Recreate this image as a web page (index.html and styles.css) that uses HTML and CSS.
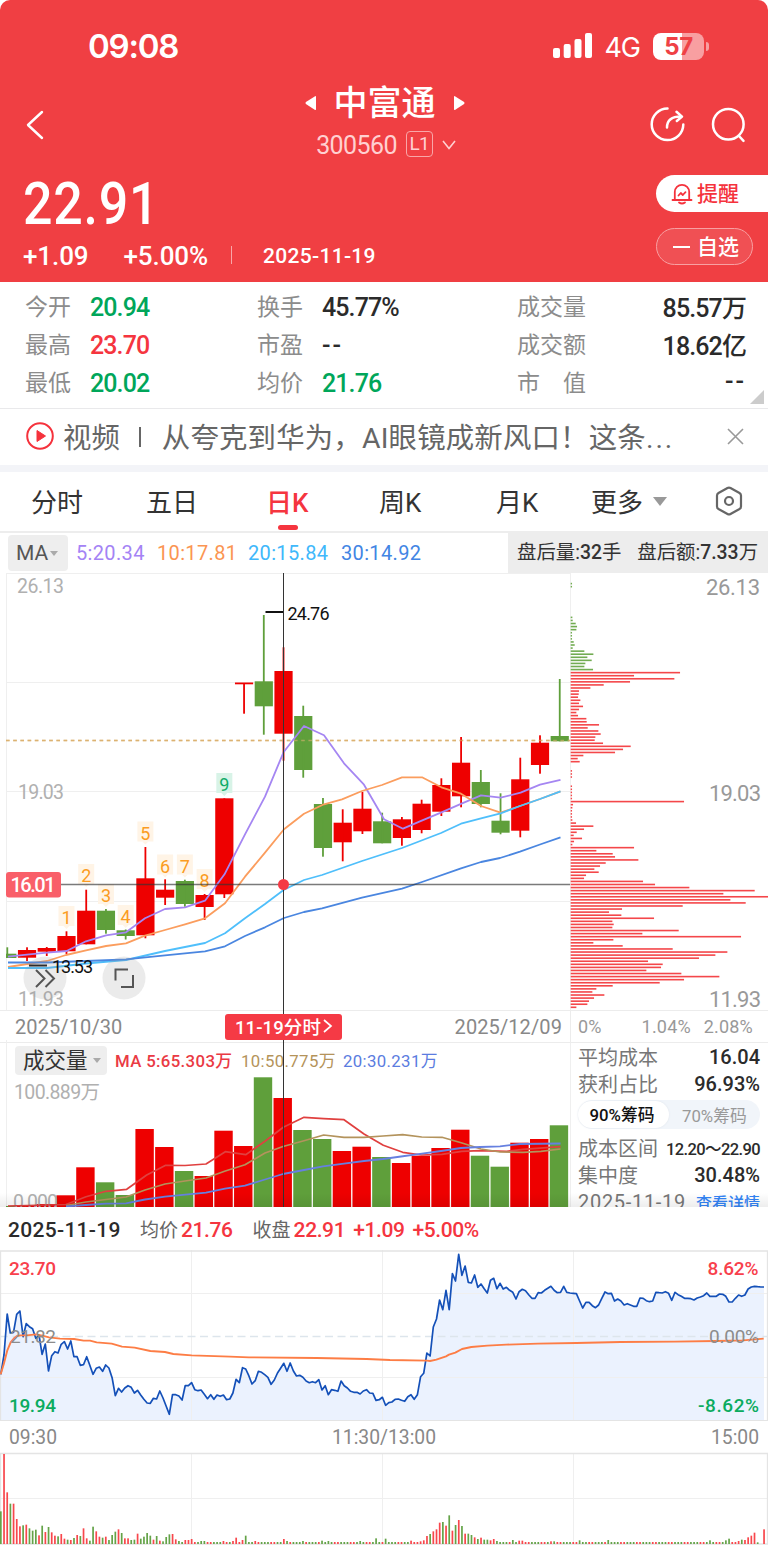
FILE: index.html
```html
<!DOCTYPE html>
<html lang="zh-CN">
<head>
    <meta charset="UTF-8">
    <meta name="viewport" content="width=device-width, initial-scale=1.0">
    <title>中富通 300560</title>
    <link rel="stylesheet" href="styles.css">
</head>
<body>
    <header class="header">
        <div class="status-bar">
            <span class="clock">09:08</span>
            <div class="status-right">
                <svg width="40" height="26" viewBox="0 0 40 26" fill="#fff">
                    <rect x="0" y="15" width="7" height="10" rx="2"/>
                    <rect x="10.7" y="11" width="7" height="14" rx="2"/>
                    <rect x="21.5" y="6" width="7" height="19" rx="2"/>
                    <rect x="32" y="0" width="7" height="25" rx="2"/>
                </svg>
                <span class="network">4G</span>
                <div class="battery"><span>57</span></div>
                <i class="battery-tip"></i>
            </div>
        </div>

        <nav class="nav">
            <svg class="back" width="20" height="30" viewBox="0 0 20 30" fill="none" stroke="#fff" stroke-width="2.4" stroke-linecap="round" stroke-linejoin="round"><path d="M17 2 3 15 17 28"/></svg>
            <div class="stock">
                <div class="stock-name">
                    <svg width="11" height="16" viewBox="0 0 12 16" fill="#fff"><path d="M11 0.5Q12 0 12 1.500V14.500Q12 16 11 15.500L1 9Q0 8 1 7z"/></svg>
                    <h1>中富通</h1>
                    <svg width="11" height="16" viewBox="0 0 12 16" fill="#fff"><path d="M1 0.5Q0 0 0 1.500V14.500Q0 16 1 15.500L11 9Q12 8 11 7z"/></svg>
                </div>
                <div class="stock-code">
                    <span>300560</span>
                    <span class="level">L1</span>
                    <svg width="14" height="10" viewBox="0 0 14 10" fill="none" stroke="#ffd0d1" stroke-width="1.6"><path d="M1 0 7 7.500 13 0"/></svg>
                </div>
            </div>
            <div class="nav-icons">
                <svg width="36" height="36" viewBox="0 0 36 36" fill="none" stroke="#fff" stroke-width="2.5" stroke-linecap="round" stroke-linejoin="round">
                    <path d="M17.500 1.500A15.800 15.800 0 1 0 33.300 17.500"/>
                    <path d="M17 20.500C17 13 21.500 9.600 31 9.600"/>
                    <path d="M26.500 4.800 32 9.600 26.800 14"/>
                </svg>
                <svg width="36" height="36" viewBox="0 0 36 36" fill="none" stroke="#fff" stroke-width="2.500" stroke-linecap="round">
                    <circle cx="17.300" cy="17.300" r="15.300"/>
                    <path d="m28 29 4.500 4.800"/>
                </svg>
            </div>
        </nav>

        <div class="quote">
            <div class="quote-left">
                <div class="price">22.91</div>
                <div class="change">
                    <span>+1.09</span>
                    <span class="pct">+5.00%</span>
                    <i class="bar"></i>
                    <span class="date">2025-11-19</span>
                </div>
            </div>
            <div class="quote-right">
                <div class="remind">
                    <svg width="22" height="22" viewBox="0 0 22 22" fill="none" stroke="#f5323c" stroke-width="1.800" stroke-linecap="round" stroke-linejoin="round">
                        <path d="M3.800 17V9a7.200 7.200 0 0 1 14.400 0V17M1.500 17h19M8 19.500q3 2 6 0M7.500 12.500l2.300-2.500 2 2 2.700-2.800"/>
                    </svg>
                    <span>提醒</span>
                </div>
                <div class="watch"><i></i><span>自选</span></div>
            </div>
        </div>
    </header>

    <section class="stats">
        <dl>
            <div><dt>今开</dt><dd class="down">20.94</dd></div>
            <div><dt>最高</dt><dd class="up">23.70</dd></div>
            <div><dt>最低</dt><dd class="down">20.02</dd></div>
        </dl>
        <dl>
            <div><dt>换手</dt><dd>45.77%</dd></div>
            <div><dt>市盈</dt><dd class="none">--</dd></div>
            <div><dt>均价</dt><dd class="down">21.76</dd></div>
        </dl>
        <dl class="spread">
            <div><dt>成交量</dt><dd>85.57万</dd></div>
            <div><dt>成交额</dt><dd>18.62亿</dd></div>
            <div><dt>市　值</dt><dd class="none">--</dd></div>
        </dl>
        <i class="corner"></i>
    </section>

    <section class="news">
        <svg width="28" height="28" viewBox="0 0 28 28"><circle cx="14" cy="14" r="12.800" fill="none" stroke="#f5323c" stroke-width="2"/><path d="M11 8.500 19.500 14 11 19.500z" fill="#f5323c" stroke="#f5323c" stroke-linejoin="round"/></svg>
        <span class="tag">视频</span>
        <i></i>
        <p>从夸克到华为，AI眼镜成新风口！这条<span class="dots">...</span></p>
        <svg class="close" width="17" height="17" viewBox="0 0 17 17" stroke="#999" stroke-width="1.600"><path d="m1 1 15 15M16 1 1 16"/></svg>
    </section>

    <nav class="tabs">
        <a>分时</a>
        <a>五日</a>
        <a class="active">日K</a>
        <a>周K</a>
        <a>月K</a>
        <a class="more">更多<i></i></a>
        <svg width="28" height="30" viewBox="0 0 28 30" fill="none" stroke="#666" stroke-width="2.200" stroke-linejoin="round"><path d="M12.500 2q1.500-.8 3 0l9 5q1.500.9 1.500 2.600v10.800q0 1.700-1.500 2.600l-9 5q-1.500.8-3 0l-9-5Q2 22.100 2 20.400V9.600Q2 7.900 3.500 7z"/><circle cx="14" cy="15" r="4"/></svg>
    </nav>

    <section class="ma-bar">
        <button class="picker">MA<i></i></button>
        <span class="ma5">5:20.34</span>
        <span class="ma10">10:17.81</span>
        <span class="ma20">20:15.84</span>
        <span class="ma30">30:14.92</span>
        <div class="after-hours"><span>盘后量:<b>32</b>手</span><span>盘后额:<b>7.33</b>万</span></div>
    </section>

    <main class="charts">
        <div class="left">
            <svg class="kline" width="570" height="437" viewBox="0 573 570 437">
                <path class="grid" d="M6 573.500H570M6 682.500H570M6 791.500H570M6 901.500H570M6.500 573V1010"/>
                <g class="axis-text">
                    <text x="17" y="593" textLength="47">26.13</text>
                    <text x="18" y="799" textLength="46">19.03</text>
                    <text x="18" y="1005.500" textLength="46">11.93</text>
                </g>
                <path d="M6 740.500H570" stroke="#dcb272" stroke-width="1.600" stroke-dasharray="3.600 3.600"/>
                <g id="candles"></g>
                <path d="M6 740.500H570" stroke="#dcb272" stroke-opacity=".6" stroke-width="1.400" stroke-dasharray="3.600 3.600"/>
                <g id="signals"></g>
                <g id="ma-lines"></g>
                <path d="M265.500 612H283M29 965.500H47" stroke="#111" stroke-width="1.800"/>
                <text class="mark" x="287.500" y="619.500" textLength="42">24.76</text>
                <g fill="#999" fill-opacity=".2"><circle cx="45" cy="978" r="21.500"/><circle cx="124" cy="978" r="21.500"/></g>
                <text class="mark" x="52" y="973" textLength="41">13.53</text>
                <path d="m36 970 8.500 8.500-8.500 8.500M45.500 970l8.500 8.500-8.500 8.500M115.500 980.500V969.500H128M121 987H133V975" fill="none" stroke="#555" stroke-width="2"/>
                <path d="M61 884.500H570" stroke="#333" stroke-opacity=".65" stroke-width="1.600"/>
                <rect x="6" y="872" width="55" height="25.500" rx="3" fill="#f95f69"/>
                <text class="tag-text" x="10.500" y="892" textLength="45">16.01</text>
            </svg>
            <div class="dates">
                <span>2025/10/30</span>
                <b>11-19分时<svg width="9" height="14" viewBox="0 0 9 14" fill="none" stroke="#fff" stroke-width="1.700"><path d="m1 1 7 6-7 6"/></svg></b>
                <span>2025/12/09</span>
            </div>
            <div class="volume">
                <div class="volume-head">
                    <button class="picker">成交量<i></i></button>
                    <span class="v5">MA 5:65.303万</span>
                    <span class="v10">10:50.775万</span>
                    <span class="v20">20:30.231万</span>
                </div>
                <svg width="570" height="130" viewBox="0 1077 570 130">
                    <path class="grid" d="M6.500 1040V1207"/>
                    <g class="axis-text">
                        <text x="14" y="1099" textLength="86">100.889万</text>
                    </g>
                    <g id="volume-bars"></g>
                    <g class="axis-text"><text x="13" y="1209" textLength="45">0.000</text></g>
                    <g id="volume-lines"></g>
                </svg>
            </div>
            <i class="crosshair"></i>
            <i class="cross-dot"></i>
        </div>

        <div class="right">
            <svg width="198" height="437" viewBox="570 573 198 437">
                <path class="grid" d="M570.500 573V1010"/>
                <g id="chips"></g>
                <g class="chip-axis">
                    <text x="706" y="594.500" textLength="54">26.13</text>
                    <text x="709" y="800.500" textLength="52">19.03</text>
                    <text x="709" y="1007" textLength="52">11.93</text>
                </g>
            </svg>
            <div class="chip-scale"><span>0%</span><span>1.04%</span><span>2.08%</span></div>
            <div class="chip-info">
                <p><span>平均成本</span><b>16.04</b></p>
                <p><span>获利占比</span><b>96.93%</b></p>
                <div class="switch"><b>90%筹码</b><span>70%筹码</span></div>
                <p><span>成本区间</span><b class="range">12.20～22.90</b></p>
                <p><span>集中度</span><b>30.48%</b></p>
                <p><span class="day">2025-11-19</span><a>查看详情</a></p>
            </div>
        </div>
        <i class="fade"></i>
    </main>

    <section class="summary">
        <b>2025-11-19</b>
        <span class="avg">均价</span><em>21.76</em>
        <span class="close-label">收盘</span><em>22.91</em><em class="diff">+1.09</em><em class="diff">+5.00%</em>
    </section>

    <section class="intraday">
        <svg width="768" height="170" viewBox="0 1250 768 170">
            <g id="price-area"></g>
            <path class="grid" d="M0 1293.500H767M0 1377.500H767M191.500 1250V1420M382.500 1250V1420M573.500 1250V1420"/>
            <path class="frame" d="M0.500 1420V1251H767.500V1420"/>
            <path d="M0 1336.500H767" stroke="#dde5ec" stroke-width="1.300" stroke-dasharray="8 4.500"/>
            <g id="price-lines"></g>
            <g class="intraday-text">
                <text class="up" x="9" y="1274.500" textLength="47">23.70</text>
                <text class="mid" x="10" y="1343" textLength="46">21.82</text>
                <text class="down" x="9" y="1412" textLength="47">19.94</text>
                <text class="up" x="707.500" y="1274.500" textLength="51">8.62%</text>
                <text class="mid" x="709" y="1343" textLength="50">0.00%</text>
                <text class="down" x="698" y="1412" textLength="61">-8.62%</text>
            </g>
        </svg>
        <div class="times"><span>09:30</span><span>11:30/13:00</span><span>15:00</span></div>
        <svg width="768" height="92" viewBox="0 1453 768 92">
            <path class="grid" d="M0 1498.500H767M191.500 1453V1544M382.500 1453V1544M573.500 1453V1544"/>
            <path class="frame" d="M0 1453.500H767.500V1544H0.500V1453"/>
            <g id="minute-bars"></g>
        </svg>
    </section>

    <script src="script.js"></script>
</body>
</html>
```

FILE: styles.css
```css
* {
    box-sizing: border-box;
}
body {
    margin: 0;
    width: 768px;
    background: #fff;
    color: #2b2b2b;
    font-family: Roboto, "Noto Sans CJK SC", sans-serif;
}
svg {
    display: block;
    flex: none;
    overflow: visible;
}
h1, p, dl, dd {
    margin: 0;
}
i, em {
    font-style: normal;
}
b {
    font-weight: 500;
}
.up {
    color: #f5353f;
    fill: #f8404c;
}
.down {
    color: #00a65a;
    fill: #0bab60;
}

/* header */
.header {
    height: 282px;
    background: #f03f43;
    border-radius: 10px 10px 0 0;
    color: #fff;
}
.status-bar {
    display: flex;
    justify-content: space-between;
    align-items: center;
    height: 84px;
    padding: 8px 59px 0 88px;
    font-family: Inter, sans-serif;
}
.clock {
    font-size: 33px;
    font-weight: 600;
    letter-spacing: -1.2px;
}
.status-right {
    display: flex;
    align-items: center;
}
.network {
    margin: 2px 13px 0 11px;
    font-size: 27px;
    letter-spacing: -1px;
}
.battery {
    width: 51px;
    height: 27px;
    border-radius: 8px;
    background: linear-gradient(90deg, #fff 56%, #f89fa1 56%);
    color: #ef4145;
    font-size: 24px;
    font-weight: 700;
    line-height: 27px;
    text-align: center;
    letter-spacing: -0.5px;
}
.battery-tip {
    width: 3px;
    height: 9px;
    margin-left: 2px;
    border-radius: 0 4px 4px 0;
    background: #f89fa1;
}
.nav {
    display: grid;
    grid-template-columns: 120px 1fr 120px;
    align-items: center;
    height: 82px;
    padding: 0 21px 0 25px;
}
.stock-name, .stock-code {
    display: flex;
    justify-content: center;
    align-items: center;
    height: 41px;
}
.stock-name {
    gap: 18px;
    padding: 0 3px 4px 0;
}
.stock-name h1 {
    font-size: 34px;
    font-weight: 500;
    line-height: 40px;
}
.stock-code {
    gap: 9px;
    font-size: 25px;
    letter-spacing: -0.6px;
    color: #ffd0d1;
}
.level {
    width: 27px;
    height: 26px;
    margin-top: -3px;
    border: 1px solid #f9a6a8;
    border-radius: 4px;
    font-size: 19px;
    line-height: 24px;
    text-align: center;
}
.nav-icons {
    display: flex;
    justify-content: flex-end;
    gap: 25px;
}
.quote {
    display: flex;
    justify-content: space-between;
}
.quote-left {
    padding-left: 23px;
}
.price {
    height: 75px;
    font-size: 59px;
    font-weight: 500;
    line-height: 76px;
    letter-spacing: 0.9px;
    transform: scaleX(0.88);
    transform-origin: left;
}
.change {
    display: flex;
    align-items: center;
    height: 30px;
    font-size: 26px;
    font-weight: 500;
    letter-spacing: -0.1px;
}
.pct {
    margin-left: 35px;
}
.change .bar {
    width: 1px;
    height: 18px;
    margin: 0 31px 3px 23px;
    background: #f9a6a8;
}
.date {
    font-size: 21px;
    letter-spacing: 0.3px;
}
.quote-right {
    display: flex;
    flex-direction: column;
    gap: 16px;
    width: 112px;
    padding-top: 9px;
}
.remind, .watch {
    display: flex;
    align-items: center;
    height: 37px;
    font-size: 21px;
    font-weight: 500;
}
.remind span, .watch span {
    margin-top: -4px;
}
.remind {
    gap: 4px;
    padding-left: 15px;
    border-radius: 19px 0 0 19px;
    background: #fff;
    color: #f5323c;
}
.watch {
    gap: 7px;
    width: 97px;
    padding-left: 16px;
    border: 1px solid #f8a0a2;
    border-radius: 19px;
    background: #f05054;
}
.watch i {
    width: 17px;
    height: 2px;
    background: #fff;
}

/* day stats */
.stats {
    position: relative;
    display: grid;
    grid-template-columns: 232px 260px 229px;
    height: 127px;
    padding: 6px 0 0 25px;
    border-bottom: 1px solid #e9e9eb;
}
.stats dl div {
    display: flex;
    align-items: center;
    height: 38px;
}
.stats dt {
    margin-top: -4px;
    font-size: 23px;
    color: #8c8c8c;
}
.stats dd {
    margin-left: 19px;
    font-size: 25px;
    font-weight: 500;
    letter-spacing: -0.9px;
}
.stats .none {
    letter-spacing: 2px;
}
.spread div {
    justify-content: space-between;
}
.spread dd {
    margin-top: -3px;
}
.corner {
    position: absolute;
    right: 4px;
    bottom: 4px;
    width: 14px;
    height: 14px;
    background: #ccc;
    clip-path: polygon(100% 0, 100% 100%, 0 100%);
}

/* news line */
.news {
    display: flex;
    align-items: center;
    height: 63px;
    padding: 0 24px 2px 26px;
    border-bottom: 7px solid #f3f4f8;
    font-size: 28.4px;
    color: #666;
}
.news .tag {
    margin: -2px 0 0 9px;
}
.news i {
    width: 2px;
    height: 20px;
    margin: 2px 21px 0 19px;
    background: #666;
}
.news p {
    margin-top: -2px;
    letter-spacing: 0.2px;
    white-space: nowrap;
}
.dots {
    letter-spacing: 2px;
}
.close {
    margin-left: auto;
}

/* period tabs */
.tabs {
    display: grid;
    grid-template-columns: 115px 120px 113px 117px 95px 124px 28px;
    align-items: center;
    height: 61px;
    padding: 0 0 1px 31px;
    border-bottom: 2px solid #ededed;
    font-size: 26px;
    color: #333;
}
.tabs a {
    margin-top: -2px;
}
.tabs .active {
    position: relative;
    font-weight: 500;
    color: #f5353f;
}
.tabs .active::after {
    content: "";
    position: absolute;
    left: 12px;
    bottom: -11px;
    width: 20px;
    height: 5px;
    border-radius: 3px;
    background: #f5353f;
}
.more {
    display: flex;
    align-items: center;
    gap: 10px;
}
.more i {
    margin-top: 3px;
    border: 7px solid transparent;
    border-top: 9px solid #999;
    border-bottom: 0;
}

/* moving average bar */
.ma-bar {
    display: flex;
    align-items: center;
    height: 40px;
    padding-left: 8px;
    font-size: 20px;
    letter-spacing: 0.35px;
    white-space: nowrap;
}
.picker {
    display: flex;
    align-items: center;
    gap: 2px;
    width: 60px;
    height: 36px;
    margin-right: 8px;
    padding: 0 0 0 8px;
    border: 0;
    border-radius: 4px;
    background: #eee;
    font: 21px Roboto, "Noto Sans CJK SC", sans-serif;
    color: #555;
}
.picker i {
    border: 4.500px solid transparent;
    border-top: 5px solid #aaa;
    border-bottom: 0;
}
.ma5 {
    width: 81px;
    color: #a483f5;
}
.ma10 {
    width: 91px;
    color: #fb9552;
}
.ma20 {
    width: 93px;
    color: #40b8fb;
}
.ma30 {
    color: #4285e4;
}
.after-hours {
    display: flex;
    gap: 16px;
    height: 40px;
    margin-left: auto;
    width: 260px;
    padding-left: 9px;
    background: #ededed;
    font-size: 19.400px;
    letter-spacing: 0;
    line-height: 40px;
    color: #333;
}

/* charts */
.charts {
    position: relative;
    display: grid;
    grid-template-columns: 570px 198px;
    height: 634px;
    overflow: hidden;
}
.left {
    position: relative;
}
.grid {
    fill: none;
    stroke: #efefef;
}
.axis-text {
    font-size: 19.500px;
    fill: #b0b0b0;
}
.mark {
    font-size: 18px;
    fill: #111;
}
.tag-text {
    font-size: 20px;
    font-weight: 500;
    fill: #fff;
}
.signal {
    font-size: 18px;
    text-anchor: middle;
}
.dates {
    display: flex;
    align-items: center;
    height: 33px;
    padding: 0 8px 0 15px;
    border: solid #ececec;
    border-width: 1px 0;
    font-size: 20px;
    letter-spacing: 0.1px;
    color: #888;
}
.dates span:first-child {
    width: 210px;
}
.dates span:last-child {
    margin-left: auto;
}
.dates b {
    position: relative;
    z-index: 2;
    display: flex;
    justify-content: center;
    align-items: center;
    gap: 2px;
    width: 117px;
    height: 26px;
    padding-bottom: 1px;
    border-radius: 3px;
    background: #f53a45;
    color: #fff;
    font-size: 18.500px;
}
.volume-head {
    display: flex;
    align-items: center;
    height: 34px;
    padding-left: 15px;
    font-size: 16.800px;
    white-space: nowrap;
}
.volume-head .picker {
    gap: 5px;
    width: 92px;
    height: 29px;
    margin-right: 8px;
    padding-bottom: 4px;
    font-size: 21.500px;
    color: #333;
}
.volume-head .picker i {
    margin-top: 4px;
}
.volume-head span {
    letter-spacing: 0.35px;
}
.v5 {
    width: 126px;
    font-weight: 500;
    color: #ea3a44;
}
.v10 {
    width: 102px;
    color: #b4935a;
}
.v20 {
    color: #5b7ce0;
}
.crosshair {
    position: absolute;
    left: 283px;
    top: 0;
    width: 1px;
    height: 100%;
    background: #333;
}
.cross-dot {
    position: absolute;
    left: 278px;
    top: 306px;
    width: 11px;
    height: 11px;
    border-radius: 50%;
    background: #f53a45;
}
.chip-axis {
    font-size: 22px;
    fill: #999;
}
.chip-scale {
    display: flex;
    justify-content: space-between;
    align-items: center;
    height: 33px;
    padding: 0 15px 0 7px;
    border: solid #ececec;
    border-width: 1px 0 1px 1px;
    font-size: 18px;
    letter-spacing: 0.2px;
    color: #999;
}
.chip-scale span:nth-child(2) {
    margin-left: 27px;
}
.chip-info {
    border-left: 1px solid #efefef;
    padding: 0 8px 0 7px;
}
.chip-info p {
    display: flex;
    justify-content: space-between;
    align-items: center;
    height: 27px;
    font-size: 20px;
    color: #777;
    white-space: nowrap;
}
.chip-info b {
    color: #2b2b2b;
}
.chip-info .range {
    font-size: 16.500px;
    letter-spacing: -0.6px;
}
.chip-info .day {
    letter-spacing: 0.7px;
}
.chip-info a {
    font-size: 16px;
    font-weight: 500;
    color: #3384f5;
}
.switch {
    display: flex;
    align-items: center;
    width: 182px;
    height: 29px;
    margin: 3px 0 5px;
    padding: 1px 0;
    border-radius: 15px;
    background: #f1f5fa;
    font-size: 16.800px;
    color: #999;
}
.switch b {
    width: 91px;
    height: 27px;
    margin-right: 13px;
    padding-right: 3px;
    border-radius: 14px;
    background: #fff;
    box-shadow: 0 0 2px #dde3ea;
    color: #111;
    line-height: 29px;
    text-align: center;
}
.fade {
    position: absolute;
    left: 0;
    right: 0;
    bottom: 0;
    height: 14px;
    background: linear-gradient(rgba(0, 0, 0, 0), rgba(0, 0, 0, 0.07));
}

/* selected day */
.summary {
    display: flex;
    align-items: center;
    height: 43px;
    padding: 3px 0 0 8px;
    font-size: 19px;
}
.summary b {
    width: 132px;
    font-size: 21px;
    letter-spacing: 0.3px;
}
.summary span {
    margin-top: -3px;
    color: #666;
}
.summary em {
    margin-left: 3px;
    font-size: 21px;
    font-weight: 500;
    letter-spacing: -0.4px;
    color: #f5353f;
}
.summary .close-label {
    margin-left: 20px;
}
.summary .diff {
    margin-left: 8px;
}
.frame {
    fill: none;
    stroke: #e4e4e4;
    stroke-width: 1.300;
}
.intraday-text {
    font-size: 19px;
    font-weight: 500;
}
.mid {
    font-weight: 400;
    fill: #8c8c8c;
}
.times {
    display: flex;
    justify-content: space-between;
    align-items: center;
    height: 33px;
    padding: 0 9px;
    border-top: 1px solid #e4e4e4;
    font-size: 19.300px;
    color: #888;
}
```

FILE: script.js
```javascript
const RED = '#ee0000';
const GREEN = '#5f9f3b';
const STEP = 19.73;

function draw(id, markup) {
    document.getElementById(id).innerHTML = markup;
}

function rect(x, y, w, h, fill) {
    return `<rect x="${x}" y="${y}" width="${w}" height="${h}" fill="${fill}"/>`;
}

function line(points, color, width) {
    return `<polyline points="${points}" fill="none" stroke="${color}" stroke-width="${width}" stroke-linejoin="round"/>`;
}

// color, high, body top, body bottom, low
const candles = [
    ['g', 947.3, 953.7, 958, 958], ['r', 947.3, 950, 957.7, 961], ['r', 947, 948, 951.7, 956],
    ['r', 931.3, 936, 951.3, 954], ['r', 889.7, 910.7, 944.3, 944.3], ['g', 909, 910.7, 930, 933.7],
    ['g', 929.5, 930.3, 936, 939.5], ['r', 847, 878.3, 935.3, 938.3], ['r', 879.3, 889.7, 897.7, 905],
    ['g', 879.7, 881, 904, 906.7], ['r', 894, 895, 907, 920], ['r', 798.3, 798.3, 894.3, 898],
    ['r', 683, 682.5, 684.3, 713.7], ['g', 615, 681.3, 706.3, 734.7], ['r', 647.3, 671, 733.7, 760.7],
    ['g', 705.7, 716, 770, 777.7], ['g', 798, 804, 848, 856.7], ['r', 809.3, 822.7, 842.3, 861.3],
    ['r', 792, 808.7, 831.3, 834], ['g', 812.7, 821.3, 843.3, 843.3], ['r', 817, 819.3, 838, 845.7],
    ['r', 799.7, 803.7, 830, 833.3], ['r', 778.3, 785, 811.7, 816], ['r', 737, 762.7, 796.3, 807.3],
    ['g', 770, 782, 804, 807.3], ['g', 793.3, 820.7, 832.7, 834.3], ['r', 757.7, 779.3, 830.7, 837.3],
    ['r', 735.3, 742.7, 765, 773.7], ['g', 679, 736, 741.3, 741.3]
];
draw('candles', candles.map(([c, high, top, bottom, low], i) => {
    const x = 7.3 + i * STEP;
    const fill = c === 'r' ? RED : GREEN;
    const left = Math.max(x - 9.1, 6);
    return rect(left, top, x + 9.1 - left, bottom - top, fill) + rect(x - 0.9, high, 1.8, low - high, fill);
}).join(''));

// sequence numbers: candle index, box top
const signals = [[3, 909], [4, 867], [5, 887], [6, 908], [7, 824.5], [8, 857.5], [9, 857.5], [10, 872], [11, 776]];
draw('signals', signals.map(([i, y], n) => {
    const x = 7.3 + i * STEP;
    const last = n === 8;
    const bg = last ? '#d8f3e7' : '#fff4e6';
    return rect(x - 8, y - 3, 16, 20, bg) +
        `<path d="M${x - 3} ${y + 17}h6l-3 3z" fill="${bg}"/>` +
        `<text class="signal" x="${x}" y="${y + 15}" fill="${last ? '#12ab68' : '#fb9c22'}">${n + 1}</text>`;
}).join(''));

const ma5 = '8,956.7 27,954.7 47,952.7 66.6,951 86,941.3 106,935.3 126,932.3 145,918.3 165,909 185,907.3 205,900.7 224.5,874.3 245,834.3 265,796.7 283.5,752.3 304,726 324,735.3 344,763.3 364,784.7 384,819.3 403,828.7 421.7,820.7 441.5,812.3 461.5,803.7 481,795.3 500.6,797.7 520.6,792.7 540,784.7 560.5,779.8';
const ma10 = '8,967 47,961 66,955 86,950.3 106,946 126,943.3 145,935.7 165,930 185,924.3 205,918.3 225,903.3 245,876.7 265,852.7 284,829.3 304,813.7 324,804.3 342,799.3 362,791 382,785 402,777.3 422,777.3 441.4,787.3 461,793.7 481,806 500.6,812.7 520,806 540,799 560.5,791.3';
const ma20 = '8,968 47,968 86,963.5 126,960 165,951 185,947 205,943 225,933.3 245,918.3 265,904 283.6,890 304,880 322,875 362,861 402,848 441,833 461,823.7 481,818.3 500.6,813.3 520,806 540,799 560.5,791.3';
const ma30 = '8,962.5 47,962.5 86,961 126,959.3 165,955.3 205,951.3 225,946.3 245,936 265,927.3 284,918 304,912 322,908.3 362,897.7 402,888.7 422,882 461,868.3 481,862 500,858 520,851.7 540,844.5 560.5,837.3';
draw('ma-lines', line(ma5, '#a586f2', 1.8) + line(ma10, '#fb9d5e', 1.8) + line(ma20, '#4fbffb', 1.8) + line(ma30, '#4a86e0', 1.8));

// chip distribution, first row index and bar lengths (1/3 px)
const chips = [
    [0, GREEN, [4, 4]],
    [11, GREEN, [5, 6, 15, 19, 17, 4, 4, 4, 9, 12, 6, 41, 68, 50, 63, 44, 41, 67]],
    [29, RED, [328, 190, 311, 178, 99, 59, 25, 24, 22, 29, 25, 37, 25, 17, 22, 47, 48, 85, 51, 83, 90, 74, 72, 97, 180, 157, 133, 38, 21, 27]],
    [61, RED, [4, 4, 4]],
    [66, RED, [4, 4, 4, 4, 4, 340, 7, 5, 4, 4, 4, 5, 16, 68, 40, 18, 9, 34, 10, 5, 190, 77, 126, 133, 203, 105, 88, 71, 84, 46, 40,
        217, 253, 356, 552, 458, 593, 479, 525, 336, 154, 115, 152, 250, 125, 129, 125, 324, 215, 511, 128, 68, 156, 306, 470, 434,
        385, 232, 276, 271, 227, 332, 446, 340, 267, 126, 77, 65, 101, 70, 55, 50, 17]]
];
draw('chips', chips.map(([start, color, rows]) => rows.map((len, i) =>
    rect(570.7, 582.8 + (start + i) * 3.0703, len / 3, 1.6, color === RED ? '#f4474a' : '#72ac52')
).join('')).join(''));

// tops of the daily volume bars
const volumes = [1206, 1205.3, 1204, 1195.3, 1167.3, 1182.3, 1195, 1129, 1147, 1171, 1176, 1130.7, 1146, 1077.3, 1098,
    1130, 1139, 1151, 1146.7, 1157, 1163, 1155.7, 1148, 1129.7, 1155.7, 1166.7, 1142.7, 1139, 1125.3];
draw('volume-bars', volumes.map((top, i) => {
    const x = Math.max(6.5 + i * STEP - 9.2, 6);
    const c = candles[i][0];
    return rect(x, top, 6.5 + i * STEP + 9.2 - x, 1207 - top, c === 'r' ? RED : GREEN);
}).join(''));

const v5 = '8,1206 66,1204.5 86,1196.7 106,1191.3 126.7,1189.3 146.7,1175 165.7,1165.3 185,1165.5 206,1164 225.3,1151.7 245.7,1154.7 265.3,1141 283.3,1127.3 304,1117.3 323.7,1118.7 344,1119.7 364,1134 383.3,1145.3 402.7,1152.3 421.7,1155 441.7,1154.3 461.7,1151.3 480,1150.7 506.7,1151.3 523,1149.3 560.5,1146.7';
const v10 = '66,1205.5 86,1202 126,1197 145,1190 165,1184 185,1181 206,1178 225.3,1171 245,1164.7 265,1153 283,1146.5 304,1140.7 323.7,1135 344,1137.3 364,1137.3 383,1136 402.7,1134.7 421.7,1137 442,1137.3 462,1143 481,1149 500,1152 523,1152.3 541,1151.3 560.5,1149';
const v20 = '66,1206.5 86,1205 106,1203.7 126,1203.3 145,1199.5 165,1196.7 206,1192.7 225,1188.7 245,1185.7 265,1179.5 283,1174 304,1170 323,1166.3 344,1163.7 364,1161 383,1159 401,1156.5 422,1153.7 441,1151 461,1148 480,1147 500,1146.3 520,1144 560.5,1143.5';
draw('volume-lines', line(v5, '#e0403f', 1.7) + line(v10, '#b3935c', 1.7) + line(v20, '#6680e0', 1.8));

// one value per minute, 1/3 px below y = 1245
const prices = [
    388, 330, 207, 264, 262, 208, 198, 275, 236, 245, 251, 280, 270, 328, 297, 378, 332, 320, 324, 298,
    290, 312, 288, 335, 335, 361, 359, 335, 361, 388, 370, 366, 379, 360, 369, 398, 452, 430, 441, 429,
    422, 427, 444, 436, 450, 463, 474, 475, 460, 462, 438, 459, 484, 508, 449, 449, 453, 465, 422, 422,
    413, 434, 437, 435, 448, 461, 449, 463, 450, 454, 450, 464, 462, 444, 403, 413, 368, 372, 392, 417,
    407, 379, 382, 389, 397, 418, 405, 384, 370, 355, 379, 354, 378, 393, 391, 397, 408, 413, 410, 413,
    404, 435, 422, 449, 434, 436, 439, 408, 422, 429, 439, 442, 442, 447, 438, 434, 444, 445, 466, 464,
    457, 481, 473, 471, 463, 462, 466, 469, 455, 449, 463, 449, 395, 385, 324, 333, 246, 222, 165, 194,
    136, 194, 86, 108, 28, 91, 63, 112, 114, 90, 127, 117, 131, 144, 106, 100, 131, 115, 132, 127,
    136, 142, 162, 140, 133, 137, 149, 160, 160, 143, 144, 136, 130, 124, 136, 143, 142, 124, 142, 144,
    145, 146, 168, 189, 172, 172, 182, 188, 180, 160, 141, 146, 145, 168, 162, 168, 180, 176, 180, 184,
    184, 159, 160, 167, 170, 168, 142, 143, 144, 140, 145, 166, 142, 149, 154, 160, 160, 161, 165, 159,
    156, 152, 144, 154, 154, 154, 147, 148, 154, 171, 171, 160, 150, 154, 150, 132, 126, 124, 125, 126, 126
];
const minute = i => 0.8 + i * 3.18;
const priceLine = prices.map((v, i) => `${minute(i).toFixed(1)},${(1245 + v / 3).toFixed(1)}`).join(' ');
const average = [[2, 388], [12, 355], [22, 316], [32, 292], [42, 280], [51, 273], [61, 271], [80, 271], [108, 268], [127, 272],
    [147, 277], [180, 281], [222, 282], [251, 287], [270, 287], [290, 292], [335, 296], [366, 305], [404, 308], [451, 318],
    [495, 321], [520, 327], [575, 331], [690, 335], [747, 337], [950, 339], [1100, 342], [1170, 345], [1281, 347], [1290, 348],
    [1309, 344], [1338, 334], [1347, 329], [1366, 323], [1386, 312], [1414, 306], [1462, 302], [1519, 299], [1614, 296],
    [1729, 294], [1862, 291], [2024, 290], [2148, 288], [2230, 286], [2291, 281]];
draw('price-area', `<polygon points="0.8,1420 ${priceLine} 764,1420" fill="#ebf2fe"/>`);
draw('price-lines', line(priceLine, '#1450b8', 1.7) +
    line(average.map(([x, y]) => `${x / 3},${1245 + y / 3}`).join(' '), '#fd7d45', 1.9));

// minute volumes: color and height (1/3 px), quiet minutes are left out
const minuteVolumes = ('0g98 1r270 2r155 3g121 4r121 5r75 6r53 7g56 8r58 9g47 10g40 11g43 12r26 13g55 14r36 15g51 16r35 17r25 18g23 ' +
    '19r30 20r16 21g13 22r12 23g18 24r27 25g24 26r47 27r17 28g10 29g52 30r38 31r22 32g19 33r22 34g12 35g27 36g37 37r44 38g33 ' +
    '39r17 40r17 41g12 42g13 43r31 44g16 45g22 46g33 47g25 48r13 49g24 50r10 51g8 52g21 53g29 54r30 55r14 56g9 57g6 58r12 59r12 ' +
    '60r15 63g9 64g9 70r9 73r9 74r19 76r12 77g25 80r9 89r15 90g9 95g9 101g10 103g9 113g9 118g17 121g16 129r10 132r8 133r11 134r24 ' +
    '135g30 136r38 137r44 138r64 139g66 140r55 141g86 142r40 143g57 144r72 145g54 146r31 147g31 148g27 149r20 150g15 151r19 ' +
    '152g13 153g13 154r11 155r15 156g9 161g12 163r10 164r10 173r8 174g8 182g11 191g12 223g11 228g11 229g16 232r9 233g13 234r12 ' +
    '235r20 236r25 237r34 238g5 239g0 240r44').split(' ');
const bars = {};
minuteVolumes.forEach(item => {
    const [, i, c, h] = item.match(/(\d+)([rg])(\d+)/);
    bars[i] = [c, h];
});
draw('minute-bars', prices.map((_, i) => {
    const [c, h] = bars[i] || [i % 5 < 2 ? 'r' : 'g', 6];
    return rect(minute(i) - 0.8, 1544 - h / 3, 1.7, h / 3, c === 'r' ? '#f8474c' : '#64a348');
}).join(''));
```
